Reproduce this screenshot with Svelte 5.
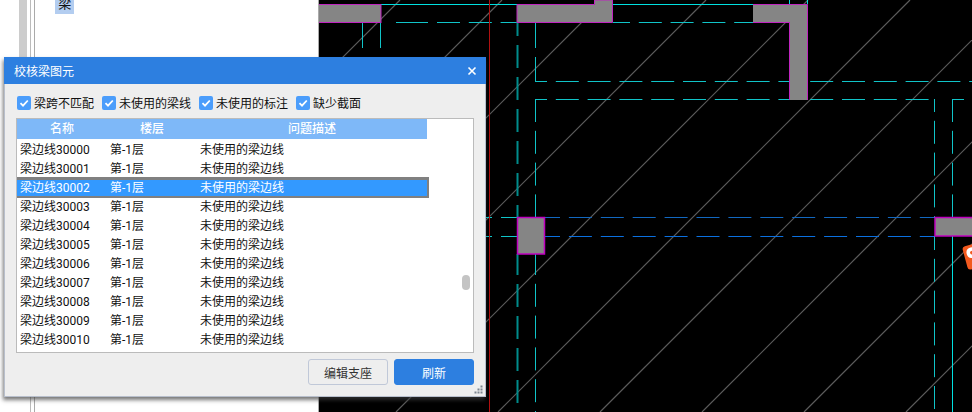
<script lang="ts">
  const filters = ['梁跨不匹配', '未使用的梁线', '未使用的标注', '缺少截面'];
  const rows = Array.from({ length: 11 }, (_, i) => `梁边线${30000 + i}`);
  const diagonals = [400, 502, 604, 706, 808, 910, 1012, 1114, 1216, 1318];
</script>

<div class="page">
  <aside class="tree">
    <div class="strip"></div>
    <div class="rail"></div>
    <div class="tree-body">
      <span class="node">梁</span>
    </div>
  </aside>

  <main class="canvas">
    <svg width="653" height="412" viewBox="319 0 653 412">
      <g stroke="#5c5c5c" stroke-width="1.2">
        {#each diagonals as d}
          <line x1={d} y1="0" x2={d - 412} y2="412" />
        {/each}
      </g>

      <!-- solid axis lines -->
      <g stroke="#00e0e0" stroke-width="1" fill="none">
        <path d="M381 4.5H517M613 4.5H753" />
        <path d="M789.5 0V4M807.5 0V4M952.5 236V412" />
      </g>

      <!-- dashed grid lines -->
      <g stroke="#10c4c8" stroke-width="1" fill="none" stroke-dasharray="23 8.8">
        <path d="M396 22.5H428" stroke-dasharray="none" />
        <line x1="437" y1="22.5" x2="517" y2="22.5" />
        <line x1="613" y1="22.5" x2="753" y2="22.5" stroke-dashoffset="6" />
        <path d="M362.5 23V48M362.5 57V60M380.5 23V48M380.5 57V60" stroke-dasharray="none" />
        <path d="M535.5 22V48M535.5 57V81" stroke-dasharray="none" />
        <line x1="535.5" y1="99" x2="535.5" y2="218" />
        <line x1="535.5" y1="254" x2="535.5" y2="412" stroke-dashoffset="2" />
        <line x1="535" y1="81.5" x2="972" y2="81.5" stroke-dashoffset="11" />
        <line x1="535" y1="99.5" x2="934" y2="99.5" stroke-dashoffset="11" />
        <path d="M953 99.5H964" stroke-dasharray="none" />
        <line x1="934.5" y1="99" x2="934.5" y2="218" stroke-dashoffset="10" />
        <line x1="934.5" y1="236" x2="934.5" y2="412" stroke-dashoffset="9" />
        <line x1="952.5" y1="99" x2="952.5" y2="218" />
        <path d="M486 217.5H492M501 217.5H517M486 236.5H492M501 236.5H517" stroke-dasharray="none" />
      </g>

      <g stroke="#008c8c" stroke-width="2" fill="none" stroke-dasharray="23 9">
        <line x1="517.5" y1="22" x2="517.5" y2="218" stroke-dashoffset="9" />
        <line x1="517.5" y1="254" x2="517.5" y2="412" stroke-dashoffset="2" />
      </g>

      <g fill="none" stroke-dasharray="23 8.9" stroke-dashoffset="8">
        <line x1="545" y1="217.5" x2="934" y2="217.5" stroke="#1268c0" />
        <line x1="545" y1="236.5" x2="934" y2="236.5" stroke="#0b70e0" />
      </g>

      <!-- beams and columns -->
      <g fill="#858585" stroke="#c024c0" stroke-width="1">
        <rect x="318" y="4.5" width="63" height="18" />
        <path d="M517 22.5V4.5H594.5V0H612.5V22.5Z" />
        <path d="M753 4.5H807.5V100H789.5V22.5H753Z" stroke="none" />
        <path d="M753 4.5H807.5V100M789.5 100V22.5H753" fill="none" />
        <rect x="517.5" y="217.5" width="27" height="36.5" stroke-width="1.5" stroke="#c000c0" />
        <path d="M972 217.5H935V236H972" stroke-width="1.5" stroke="#c000c0" />
      </g>

      <line x1="489.5" y1="0" x2="489.5" y2="412" stroke="#b01010" stroke-width="1" />

      <!-- floating orange badge, clipped by the window edge -->
      <g transform="rotate(-15 962 247)">
        <rect x="962" y="247" width="26" height="24" rx="3" fill="#f2591e" />
        <path d="M980 251.5H970Q966.5 251.5 966.5 255Q966.5 258.5 970 258.5H980" stroke="#fff" stroke-width="3.5" fill="none" />
        <path d="M970 265H980" stroke="#fff" stroke-width="3.5" />
      </g>
    </svg>
  </main>

  <section class="dialog">
    <header class="titlebar">
      <span class="title">校核梁图元</span>
      <svg class="close" width="10" height="10" viewBox="0 0 10 10">
        <path d="M1.5 1.5L8.5 8.5M8.5 1.5L1.5 8.5" stroke="#fff" stroke-width="1.6" />
      </svg>
    </header>

    <div class="content">
      <div class="filters">
        {#each filters as label}
          <label class="check">
            <span class="box">
              <svg width="14" height="14" viewBox="0 0 14 14">
                <path d="M3.5 7.2L6 9.7L10.8 4.5" stroke="#fff" stroke-width="1.8" fill="none" />
              </svg>
            </span>
            {label}
          </label>
        {/each}
      </div>

      <div class="table">
        <div class="row head">
          <span>名称</span>
          <span>楼层</span>
          <span>问题描述</span>
        </div>
        {#each rows as name, i}
          <div class="row" class:selected={i === 2}>
            <span>{name}</span>
            <span>第-1层</span>
            <span>未使用的梁边线</span>
          </div>
        {/each}
        <div class="thumb"></div>
      </div>

      <div class="actions">
        <button class="btn">编辑支座</button>
        <button class="btn primary">刷新</button>
      </div>
    </div>

    <svg class="grip" width="10" height="10" viewBox="0 0 10 10" fill="#7d8590">
      <rect x="6.5" y="0.5" width="2" height="2" />
      <rect x="3.5" y="3.5" width="2" height="2" />
      <rect x="6.5" y="3.5" width="2" height="2" />
      <rect x="0.5" y="6.5" width="2" height="2" />
      <rect x="3.5" y="6.5" width="2" height="2" />
      <rect x="6.5" y="6.5" width="2" height="2" />
    </svg>
  </section>
</div>

<style>
  :global(body) {
    margin: 0;
    background: #000;
  }

  .page {
    position: relative;
    display: flex;
    width: 972px;
    height: 412px;
    overflow: hidden;
    font-family: Roboto, 'Noto Sans CJK SC', sans-serif;
    font-size: 12px;
    color: #111;
  }

  /* Left tree panel */
  .tree {
    display: flex;
    width: 319px;
    flex: none;
    background: #fff;
    box-sizing: border-box;
    padding-left: 19px;
  }

  .strip {
    width: 8px;
    height: 300px;
    background: #ccc;
  }

  .rail {
    width: 6px;
    margin-left: 3px;
    box-sizing: border-box;
    border-left: 1px solid #bbb;
    border-right: 1px solid #aaa;
  }

  .tree-body {
    width: 279px;
    border-right: 1px solid #aaa;
    padding-left: 20px;
  }

  .node {
    display: block;
    width: 19px;
    height: 14px;
    background: #b3cdf0;
    line-height: 8px;
    text-align: center;
    font-size: 13px;
    overflow: hidden;
  }

  .canvas {
    flex: 1;
    background: #000;
  }

  .canvas svg {
    display: block;
  }

  /* Dialog */
  .dialog {
    position: absolute;
    left: 4px;
    top: 57px;
    width: 482px;
    height: 340px;
    display: flex;
    flex-direction: column;
    background: #eee;
    box-sizing: border-box;
    border: 1px solid #b8bfcc;
    border-top: 0;
    box-shadow: -1px 3px 4px rgba(60, 60, 60, 0.7);
  }

  .titlebar {
    display: flex;
    align-items: center;
    justify-content: space-between;
    flex: none;
    height: 27px;
    margin: 0 -1px;
    padding: 0 9px 0 10px;
    background: #2d7fe0;
    color: #fff;
  }

  .title {
    font-size: 12px;
  }

  .content {
    flex: 1;
    display: flex;
    flex-direction: column;
    padding: 0 11px;
  }

  .filters {
    display: flex;
    gap: 8px;
    height: 34px;
    align-items: center;
    padding: 3px 0 0 1px;
    box-sizing: border-box;
  }

  .check {
    display: flex;
    align-items: center;
    gap: 3px;
  }

  .box {
    width: 14px;
    height: 14px;
    border-radius: 2px;
    background: #4b9dfb;
    display: block;
  }

  .box svg {
    display: block;
  }

  .table {
    position: relative;
    height: 235px;
    box-sizing: border-box;
    background: #fff;
    border: 1px solid #bbb;
  }

  .row {
    display: grid;
    grid-template-columns: 90px 90px 230px;
    width: 410px;
    height: 19px;
    box-sizing: border-box;
    line-height: 21px;
  }

  .row span {
    padding-left: 3px;
    white-space: nowrap;
  }

  .row.head {
    height: 20px;
    line-height: 21px;
    margin-bottom: 1px;
    background: #7eb8f8;
    color: #fff;
    font-weight: 500;
  }

  .row.head span {
    padding: 0;
    text-align: center;
  }

  .row.selected {
    height: 21px;
    width: 412px;
    margin: -1px 0;
    border-top: 3px solid #808080;
    border-bottom: 2px solid #808080;
    border-right: 2px solid #808080;
    background: #3399ff;
    color: #fff;
    line-height: 17px;
  }

  .thumb {
    position: absolute;
    left: 445px;
    top: 156px;
    width: 8px;
    height: 15px;
    border-radius: 4px;
    background: #c4c4c4;
  }

  .actions {
    display: flex;
    justify-content: flex-end;
    gap: 6px;
    margin-top: 6px;
  }

  .btn {
    width: 80px;
    height: 26px;
    padding: 0;
    font: inherit;
    color: #333;
    background: #eee;
    border: 1px solid #c0c8d8;
    border-radius: 3px;
  }

  .btn.primary {
    background: #2d7fe0;
    border-color: #2d7fe0;
    color: #fff;
  }

  .grip {
    position: absolute;
    right: 1px;
    bottom: 1px;
  }
</style>
